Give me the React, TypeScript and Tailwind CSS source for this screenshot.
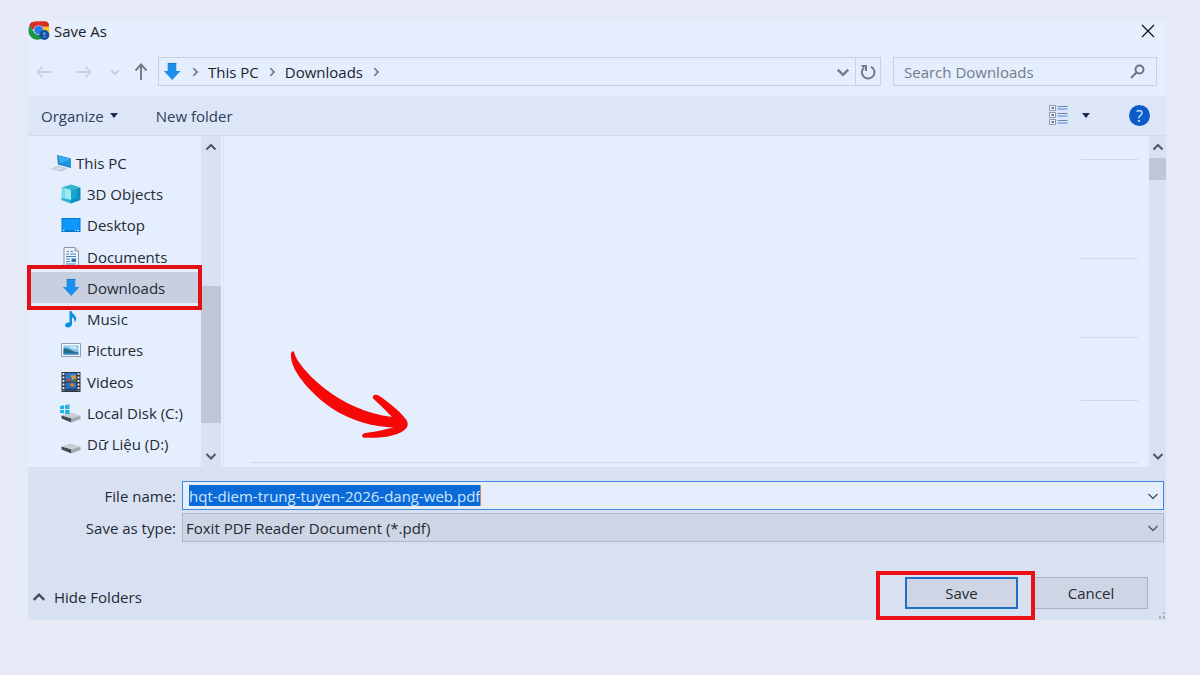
import type { ReactNode } from "react";

type ChevronProps = { dir: "up" | "down" | "right"; className: string; stroke?: number };

function Chevron({ dir, className, stroke = 2 }: ChevronProps) {
  const d = { up: "M1.5 8.5 6 4l4.500 4.500", down: "M1.500 4 6 8.500 10.500 4", right: "M4 1.500 8.500 6 4 10.500" }[dir];
  return (
    <svg viewBox="0 0 12 12" className={className} fill="none" stroke="currentColor" strokeWidth={stroke} aria-hidden="true">
      <path d={d} />
    </svg>
  );
}

function ChromeIcon() {
  return (
    <svg viewBox="0 0 66 60" className="h-5 w-[22px]" aria-hidden="true">
      <path d="M10 4Q18 1 32 1h20q8 1 11 8v8H34L14 26 4 14Q6 7 10 4Z" fill="#dc2f20" />
      <path d="M60 6q5 10 4 28l-10 18-20 2 12-20-6-16h23Z" fill="#fcc41c" />
      <path d="M5 13Q-1 25 3 39q6 16 24 17l11-1 8-17-14 4-12-5Z" fill="#1d9447" />
      <circle cx="32" cy="27" r="14.500" fill="#b9d2f7" />
      <circle cx="32" cy="27" r="13" fill="#2c78ee" />
      <circle cx="49" cy="42" r="15" fill="#11509f" />
      <circle cx="49" cy="38" r="4" fill="#6fa2e0" />
      <path d="M44 49v-4h10v4Z" fill="#5488cc" />
    </svg>
  );
}

function DownloadArrow() {
  return (
    <svg viewBox="0 0 20 20" className="h-[19px] w-5" aria-hidden="true">
      <path d="M6 1h8.500v8.500H19L10.200 19 1.500 9.500H6Z" fill="#1b8fea" />
      <path d="M6 1.500h8.500M6 1v8.500" stroke="#1577ca" strokeWidth="1" fill="none" />
    </svg>
  );
}

function PcIcon() {
  return (
    <svg viewBox="0 0 20 20" className="h-5 w-5 overflow-visible" aria-hidden="true">
      <path d="M-1 16 6 12.500l9 3-5.500 3Z" fill="#bfc6da" />
      <path d="M1 16 6 13.500l6 2-3 1.500Z" fill="#d3d9e8" />
      <path d="m5 2 14 3.500V15L6 11.500Z" fill="#1a78bb" />
      <path d="m6 3 13 3v8L7 11Z" fill="#1c96e2" />
      <path d="m6 3 13 3-11 4.200Z" fill="#38aef0" />
    </svg>
  );
}

function CubeIcon() {
  return (
    <svg viewBox="0 0 20 20" className="h-5 w-5" aria-hidden="true">
      <path d="M.5 3.500 10 .5l9.500 3L10 6Z" fill="#35b5d0" />
      <path d="M.5 3.500 10 6v13.500L.5 16Z" fill="#74dbea" />
      <path d="M19.500 3.500 10 6v13.500l9.500-3.500Z" fill="#0f8fc0" />
      <path d="m4 5 6 1.500v9L4 14Z" fill="#b3eef4" opacity=".75" />
      <path d="M10 6.500 16 5v9l-6 2Z" fill="#17a6cd" />
      <path d="m.5 14 9.500 2v3.500L.5 16Z" fill="#27b5d2" />
    </svg>
  );
}

function DesktopIcon() {
  return (
    <svg viewBox="0 0 20 20" className="h-5 w-5" aria-hidden="true">
      <path d="M.5 3h19v14H.5Z" fill="#0877cf" />
      <path d="M1.500 4h17v11h-17Z" fill="#0c97fb" />
      <path d="M2 15.500h1.500M14 15.500h1M16 15.500h2" stroke="#d3efff" strokeWidth="1" />
    </svg>
  );
}

function DocumentIcon() {
  return (
    <svg viewBox="0 0 20 20" className="h-5 w-5" aria-hidden="true">
      <path d="M3 .5h11l3.500 3.500v15.500H3Z" fill="#edf4fc" stroke="#8b96a4" />
      <path d="M14 .5V4h3.500" fill="#cdd6e0" stroke="#8b96a4" />
      <path d="M6 4.500h2M9.500 4.500H12M5 7h3M9 7h6M5 9.500h10M5 12h4M5 14.500h4M5 17h10" stroke="#3d86c4" strokeWidth="1.200" />
      <path d="M10.500 11.500H15V15h-4.500Z" fill="#2b6fae" />
    </svg>
  );
}

function MusicIcon() {
  return (
    <svg viewBox="0 0 20 20" className="h-5 w-5" aria-hidden="true">
      <path d="M8.500 2h2c.5 3 4.500 4 4.700 7.500 0 2-1 3-1.700 4 .3-3-.8-4.500-2.500-5V15c0 2-2 3.500-4 3.500S4 17.500 4 16s2-3 4.500-2.500Z" fill="#118dec" />
    </svg>
  );
}

function PictureIcon() {
  return (
    <svg viewBox="0 0 20 20" className="h-5 w-5" aria-hidden="true">
      <path d="M.5 3.500h19v13H.5Z" fill="#f4f8fc" stroke="#929dab" />
      <path d="M2.500 5.500h15v9h-15Z" fill="#83c5ec" />
      <path d="M2.500 8.500c4-1 8 3 15 4v2h-15Z" fill="#246d86" />
      <path d="M2.500 13 17.500 13v1.500h-15Z" fill="#3b8bcc" />
      <path d="M7 6.500h8l2 3-6-1Z" fill="#d3edf9" />
    </svg>
  );
}

function VideoIcon() {
  return (
    <svg viewBox="0 0 20 20" className="h-5 w-5" aria-hidden="true">
      <path d="M.5 0h19v20H.5Z" fill="#303640" />
      <path d="M4.500 1h11v8.500h-11Z" fill="#2f77ca" />
      <path d="M4.500 10.500h11V19h-11Z" fill="#286cc0" />
      <path d="M9.500 3.500 14 3l1.500 3-4 2Z" fill="#d79b32" />
      <path d="M5 7.500h4l2 1.500H5Z" fill="#cf4032" />
      <path d="m9 9 6.500-2v2.500H9Z" fill="#50722d" />
      <path d="m8 12 4-1 2 3-3 1Z" fill="#c5862c" />
      <path d="M5 17c3-2 6 1 10-1v3H5Z" fill="#25456f" />
      <path d="M2.500 1v18M17.500 1v18" stroke="#e9eef5" strokeWidth="1.800" strokeDasharray="2 1.500" />
    </svg>
  );
}

function DriveIcon({ system = false }: { system?: boolean }) {
  return (
    <svg viewBox="0 0 20 20" className="h-5 w-5 overflow-visible" aria-hidden="true">
      <path d="M.5 12.500 9 9.500l10.500 3-9 3Z" fill="#c9cdd4" />
      <path d="m.5 12.500 10 3v4L.5 15.500Z" fill="#44484f" />
      <path d="m19.500 12.500-9 3v4l9-3.500Z" fill="#a4a9b2" />
      {system && (
        <g fill="#1fb4e6">
          <path d="m-1 3 4-.700V6h-4ZM4 2.100 8.500 1.500V6H4ZM-1 7h4v3.500l-4-.700ZM4 7h4.500v4.500L4 10.700Z" />
        </g>
      )}
    </svg>
  );
}

const folders: { name: string; icon: ReactNode; root?: boolean; selected?: boolean }[] = [
  { name: "This PC", icon: <PcIcon />, root: true },
  { name: "3D Objects", icon: <CubeIcon /> },
  { name: "Desktop", icon: <DesktopIcon /> },
  { name: "Documents", icon: <DocumentIcon /> },
  { name: "Downloads", icon: <DownloadArrow />, selected: true },
  { name: "Music", icon: <MusicIcon /> },
  { name: "Pictures", icon: <PictureIcon /> },
  { name: "Videos", icon: <VideoIcon /> },
  { name: "Local Disk (C:)", icon: <DriveIcon system /> },
  { name: "Dữ Liệu (D:)", icon: <DriveIcon /> },
];

function TitleBar() {
  return (
    <header className="flex h-5 items-center justify-between pr-2.5">
      <h1 className="flex items-center gap-1 text-[#1c2029]">
        <ChromeIcon />
        Save As
      </h1>
      <button type="button" aria-label="Close" className="grid h-5 w-4 place-items-center text-[#10141c]">
        <svg viewBox="0 0 14 14" className="h-3.5 w-3.5" fill="none" stroke="currentColor" strokeWidth="1.300">
          <path d="m1 1 12 12M13 1 1 13" />
        </svg>
      </button>
    </header>
  );
}

function AddressRow() {
  return (
    <div className="mt-4 flex h-[29px] items-center pr-[9px] text-[#5d6575]">
      <nav aria-label="History" className="flex w-[130px] shrink-0 items-center pl-2">
        <button type="button" aria-label="Back" className="text-[#c3cbd9]">
          <svg viewBox="0 0 16 12" className="h-3 w-4" fill="none" stroke="currentColor" strokeWidth="1.600">
            <path d="M16 6H1.500M6.500 1l-5 5 5 5" />
          </svg>
        </button>
        <button type="button" aria-label="Forward" className="ml-6 text-[#c3cbd9]">
          <svg viewBox="0 0 16 12" className="h-3 w-4" fill="none" stroke="currentColor" strokeWidth="1.600">
            <path d="M0 6h14.500M9.500 1l5 5-5 5" />
          </svg>
        </button>
        <button type="button" aria-label="Recent locations" className="ml-[18px] text-[#c3cbd9]">
          <Chevron dir="down" className="h-2.5 w-2.5" />
        </button>
        <button type="button" aria-label="Up" className="ml-3.5 text-[#737a87]">
          <svg viewBox="0 0 14 17" className="h-[17px] w-3.5" fill="none" stroke="currentColor" strokeWidth="1.900">
            <path d="M7 17V1.500M1.500 7.500 7 1.500l5.500 6" />
          </svg>
        </button>
      </nav>
      <div className="flex h-full min-w-0 flex-1 items-stretch border border-[#c8d1e0]">
        <div className="flex flex-1 items-center pl-[3px] text-[#20242d]">
          <DownloadArrow />
          <Chevron dir="right" className="ml-2 h-2.5 w-2.5 text-[#6d7584]" />
          <a href="#this-pc" className="ml-2">This PC</a>
          <Chevron dir="right" className="ml-2 h-2.5 w-2.5 text-[#6d7584]" />
          <a href="#downloads" className="ml-2">Downloads</a>
          <Chevron dir="right" className="ml-2 h-2.5 w-2.5 text-[#6d7584]" />
        </div>
        <button type="button" aria-label="Previous locations" className="grid w-6 place-items-center">
          <Chevron dir="down" className="h-3.5 w-3.5 text-[#737b8a]" />
        </button>
        <button type="button" aria-label="Refresh" className="grid w-[25px] place-items-center border-l border-[#c8d1e0]">
          <svg viewBox="0 0 16 16" className="h-4 w-4" fill="none" stroke="#737b89" strokeWidth="2">
            <path d="M11 2.600A6.300 6.300 0 1 1 4 3.500" />
            <path d="M1.500 2H6v5" />
          </svg>
        </button>
      </div>
      <label className="ml-3 flex h-full w-[264px] items-center border border-[#c8d1e0] pr-[11px] pl-2.5">
        <span className="hidden">Search Downloads</span>
        <input type="text" placeholder="Search Downloads" className="h-6 min-w-0 flex-1 bg-transparent outline-none placeholder:text-[#737b8a]" />
        <svg viewBox="0 0 15 15" className="h-[15px] w-[15px]" fill="none" stroke="#6d7583" strokeWidth="2" aria-hidden="true">
          <circle cx="9.500" cy="5.500" r="4" />
          <path d="m6.500 8.500-5.500 5.500" />
        </svg>
      </label>
    </div>
  );
}

function Toolbar() {
  return (
    <div className="mt-2.5 flex h-10 shrink-0 items-center border-b border-[#d0daea] bg-[#dce6f7] pr-4 pl-[13px] text-[#2d405f]">
      <button type="button" className="flex items-center gap-1.5">
        Organize
        <svg viewBox="0 0 8 5" className="h-[5px] w-2" aria-hidden="true"><path d="M0 0h8L4 5Z" fill="#1c3050" /></svg>
      </button>
      <button type="button" className="ml-[38px]">New folder</button>
      <button type="button" aria-label="Change view" className="ml-auto">
        <svg viewBox="0 0 19 21" className="h-[21px] w-[19px]" fill="none">
          <path d="M.5.5h6v5h-6ZM.5 7.500h6v5h-6ZM.5 14.500h6v5h-6Z" fill="#f2f5fa" stroke="#8d97a6" />
          <path d="M2.500 3H5M2.500 10H5M2.500 17H5" stroke="#3c4d68" strokeWidth="1.500" />
          <path d="M8.500 1.500h10M8.500 8.500h10M8.500 15.500h10" stroke="#6e819f" />
          <path d="M8.500 4h10M8.500 11h10M8.500 18h10" stroke="#79a6e9" strokeWidth="1.500" />
        </svg>
      </button>
      <button type="button" aria-label="More view options" className="ml-3.5">
        <svg viewBox="0 0 8 5" className="h-[5px] w-2"><path d="M0 0h8L4 5Z" fill="#1c3050" /></svg>
      </button>
      <button type="button" aria-label="Help" className="ml-[39px] grid h-[21px] w-[21px] place-items-center rounded-full bg-[#0c5bc8] text-[16px] leading-5 text-[#dcecff]">?</button>
    </div>
  );
}

function ScrollBar({ side }: { side: "tree" | "files" }) {
  const tree = side === "tree";
  return (
    <div className={tree ? "flex w-5 shrink-0 flex-col bg-[#d9e2f2]" : "flex w-[17px] shrink-0 flex-col bg-[#d9e2f2]"}>
      <button type="button" aria-label="Scroll up" className="grid h-[22px] place-items-center text-[#4f5663]">
        <Chevron dir="up" className="h-3 w-3" />
      </button>
      {tree && <div className="flex-[128]" />}
      <div className={tree ? "flex-[137] bg-[#bfc7d6]" : "h-[22px] bg-[#bfc7d6]"} />
      <div className={tree ? "flex-[22]" : "flex-1"} />
      <button type="button" aria-label="Scroll down" className="grid h-[22px] place-items-center text-[#4f5663]">
        <Chevron dir="down" className="h-3 w-3" />
      </button>
    </div>
  );
}

function FolderTree() {
  return (
    <ul className="flex w-[173px] shrink-0 flex-col pt-[11px] pb-[7px] text-[#252a33]">
      {folders.map((f) => (
        <li key={f.name} className="relative flex flex-1 items-stretch">
          <button
            type="button"
            className={
              f.root
                ? "flex flex-1 items-center gap-1 pl-6 text-left"
                : f.selected
                  ? "flex flex-1 items-center gap-1.5 bg-[#c8cfdf] pl-[33px] text-left"
                  : "flex flex-1 items-center gap-1.5 pl-[33px] text-left"
            }
          >
            {f.icon}
            {f.name}
          </button>
          {f.selected && <span className="pointer-events-none absolute -inset-x-px -inset-y-[7px] z-10 border-4 border-[#e30f14]" />}
        </li>
      ))}
    </ul>
  );
}

function FilePane() {
  return (
    <div className="relative ml-0.5 flex min-w-0 flex-1 flex-col items-end border-l border-[#dce6f5] pr-[11px] pb-1">
      <hr className="mt-[23px] w-[57px] border-[#cfd9e8]" />
      <hr className="mt-[98px] w-[57px] border-[#cfd9e8]" />
      <hr className="mt-[78px] w-[57px] border-[#cfd9e8]" />
      <hr className="mt-[62px] w-[57px] border-[#cfd9e8]" />
      <div className="mt-auto w-full pl-[26px]">
        <hr className="border-[#cfd9e8]" />
      </div>
      <svg viewBox="0 0 480 390" className="absolute top-[194px] left-[46px] h-[130px] w-40" aria-hidden="true">
        <path
          fill="#f60808"
          d="M63 70Q68 59 73 68C77 92 122 143 165 176C220 220 290 250 366 261C350 244 330 225 311 207C303 197 316 190 327 197C360 219 395 249 408 268Q417 282 410 293C390 318 330 326 282 323C272 320 276 310 287 309C310 306 345 300 371 292C300 292 220 264 165 220C120 185 58 120 63 70Z"
        />
      </svg>
    </div>
  );
}

function Footer() {
  return (
    <footer className="relative shrink-0 bg-[#d8e1f2] pt-3.5 text-[#252a33]">
      <div className="grid grid-cols-[148px_1fr] items-center gap-x-1.5 gap-y-[3px] pr-0.5">
        <label htmlFor="file-name" className="text-right">File name:</label>
        <div className="flex h-[29px] items-center justify-between border border-[#3f87dc] bg-[#e4eefd] pr-1 pl-1.5">
          <input
            id="file-name"
            type="text"
            defaultValue="hqt-diem-trung-tuyen-2026-dang-web.pdf"
            className="field-sizing-content h-[21px] border-r border-[#c98a5b] bg-[#0a6ad8] text-[#cfe5ff] outline-none"
          />
          <button type="button" aria-label="Previous file names"><Chevron dir="down" stroke={1.3} className="h-3 w-3 text-[#4c5564]" /></button>
        </div>
        <label htmlFor="file-type" className="text-right">Save as type:</label>
        <div className="relative flex h-[29px] items-center">
          <select id="file-type" className="h-full w-full appearance-none border border-[#b0b8c9] bg-[#ced5e4] pl-[3px] outline-none">
            <option>Foxit PDF Reader Document (*.pdf)</option>
          </select>
          <Chevron dir="down" stroke={1.3} className="pointer-events-none absolute right-[5px] h-3 w-3 text-[#4c5564]" />
        </div>
      </div>
      <div className="mt-[29px] flex items-start justify-between pr-[18px] pl-1">
        <button type="button" className="mt-4 flex items-center gap-2">
          <Chevron dir="up" className="h-3.5 w-3.5 text-[#444b59]" />
          Hide Folders
        </button>
        <div className="flex items-start">
          <div className="relative z-10 border-4 border-[#ea1016] pt-0.5 pr-[13px] pb-[7px] pl-[25px]">
            <button type="submit" className="block h-8 w-[113px] border-2 border-[#1d6fc8] bg-[#ced5e4]">Save</button>
          </div>
          <button type="button" className="mt-1.5 h-8 w-[113px] border border-l-0 border-[#a9b2c4] bg-[#ced5e4]">Cancel</button>
        </div>
      </div>
      <svg viewBox="0 0 8 8" className="absolute right-0 bottom-0 h-2 w-2" fill="#a9b2c2" aria-hidden="true">
        <path d="M5 0h2v2H5ZM5 4h2v3H5ZM1 4h2v3H1Z" />
      </svg>
    </footer>
  );
}

export default function App() {
  return (
    <main className="flex min-h-screen flex-col bg-[#e6eaf6] pt-[21px] pr-[34px] pb-[55px] pl-7 font-['Open_Sans','Noto_Sans',sans-serif] text-[15px] leading-5">
      <section aria-label="Save As" className="flex flex-1 flex-col bg-[#e4eefd]">
        <TitleBar />
        <AddressRow />
        <Toolbar />
        <div className="flex min-h-[331px] flex-1">
          <FolderTree />
          <ScrollBar side="tree" />
          <FilePane />
          <ScrollBar side="files" />
        </div>
        <Footer />
      </section>
    </main>
  );
}
